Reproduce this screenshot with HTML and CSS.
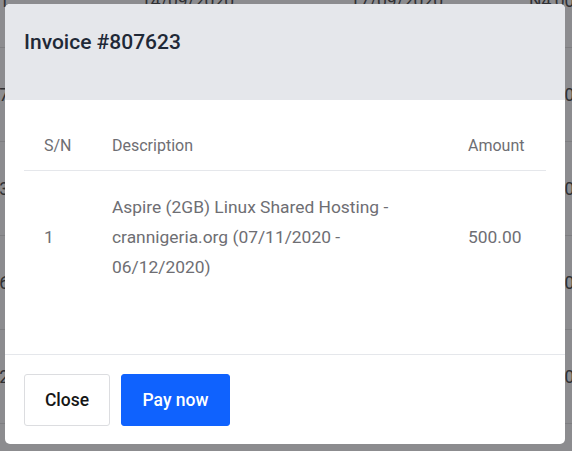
FILE: index.html
```html
<!DOCTYPE html>
<html>
<head>
<meta charset="utf-8">
<link rel="stylesheet" href="styles.css">
</head>
<body>
<div class="backdrop">
  <div class="bg-row"><span class="bg-c1">91</span><span class="bg-c2">14/09/2020</span><span class="bg-c3">17/09/2020</span><span class="bg-c4">N4,000.00</span></div>
  <div class="bg-row"><span class="bg-c1">7</span><span class="bg-c2">14/09/2020</span><span class="bg-c3">17/09/2020</span><span class="bg-c4">N4,000.00</span></div>
  <div class="bg-row"><span class="bg-c1">3</span><span class="bg-c2">14/09/2020</span><span class="bg-c3">17/09/2020</span><span class="bg-c4">N4,000.00</span></div>
  <div class="bg-row"><span class="bg-c1">6</span><span class="bg-c2">14/09/2020</span><span class="bg-c3">17/09/2020</span><span class="bg-c4">N4,000.00</span></div>
  <div class="bg-row"><span class="bg-c1">2</span><span class="bg-c2">14/09/2020</span><span class="bg-c3">17/09/2020</span><span class="bg-c4">N4,000.00</span></div>
</div>

<div class="modal">
  <div class="modal-header">
    <h2 class="modal-title">Invoice #807623</h2>
  </div>
  <div class="modal-body">
    <table class="inv-table">
      <colgroup>
        <col class="col-sn">
        <col class="col-desc">
        <col class="col-amt">
      </colgroup>
      <thead>
        <tr><th>S/N</th><th>Description</th><th>Amount</th></tr>
      </thead>
      <tbody>
        <tr>
          <td>1</td>
          <td>Aspire (2GB) Linux Shared Hosting - crannigeria.org (07/11/2020 - 06/12/2020)</td>
          <td>500.00</td>
        </tr>
      </tbody>
    </table>
  </div>
  <div class="modal-footer">
    <button class="btn btn-secondary">Close</button>
    <button class="btn btn-primary">Pay now</button>
  </div>
</div>
</body>
</html>
```

FILE: styles.css
```css
* { box-sizing: border-box; }
html, body {
  margin: 0;
  padding: 0;
  width: 572px;
  height: 451px;
  overflow: hidden;
  font-family: Roboto, "Liberation Sans", Arial, sans-serif;
}
body {
  background: #8c8c8f;
  position: relative;
}

.backdrop {
  margin-top: -46px;
  width: 572px;
  overflow: hidden;
  color: #2f3033;
  font-size: 17.5px;
}
.bg-row {
  display: flex;
  align-items: center;
  height: 94px;
  border-bottom: 1px solid #7e7e81;
  white-space: nowrap;
}
.bg-c1 {
  width: 60px;
  margin-left: -51px;
  text-align: right;
  flex: none;
}
.bg-c2 {
  margin-left: 132px;
  width: 209px;
  flex: none;
}
.bg-c3 {
  width: 179px;
  flex: none;
}
.bg-c4 {
  flex: none;
}

.modal {
  position: absolute;
  left: 5px;
  top: 4px;
  width: 560px;
  height: 440px;
  background: #ffffff;
  border-radius: 5px;
  overflow: hidden;
  display: flex;
  flex-direction: column;
}
.modal-header {
  height: 96px;
  background: #e5e7eb;
  padding: 24px 19px;
}
.modal-title {
  margin: 0;
  font-size: 21px;
  line-height: 28px;
  font-weight: 500;
  color: #1f2937;
}
.modal-body {
  flex: 1;
  padding: 20px 19px 0;
}
.inv-table {
  width: 100%;
  border-collapse: collapse;
  table-layout: fixed;
  color: #6e6e73;
}
.col-sn { width: 68px; }
.col-amt { width: 98px; }
.inv-table th {
  text-align: left;
  font-weight: 400;
  font-size: 16px;
  line-height: 24px;
  padding: 14px 20px 12px;
  border-bottom: 1px solid #e5e7eb;
}
.inv-table th:last-child { padding-right: 0; }
.inv-table td {
  font-size: 17.4px;
  line-height: 30px;
  padding: 21px 20px;
  vertical-align: middle;
}
.inv-table td:last-child { padding-right: 0; }

.modal-footer {
  height: 90px;
  border-top: 1px solid #e5e7eb;
  padding: 19px 19px;
  display: flex;
  gap: 11px;
  align-items: flex-start;
}
.btn {
  height: 52px;
  padding: 0;
  font-family: Roboto, "Liberation Sans", Arial, sans-serif;
  font-size: 17.5px;
  font-weight: 500;
  border-radius: 3px;
  cursor: pointer;
}
.btn-secondary {
  background: #ffffff;
  border: 1px solid #dcdde0;
  color: #161616;
  width: 86px;
}
.btn-primary {
  background: #0f62fe;
  border: 1px solid #0f62fe;
  color: #ffffff;
  width: 109px;
}
```
